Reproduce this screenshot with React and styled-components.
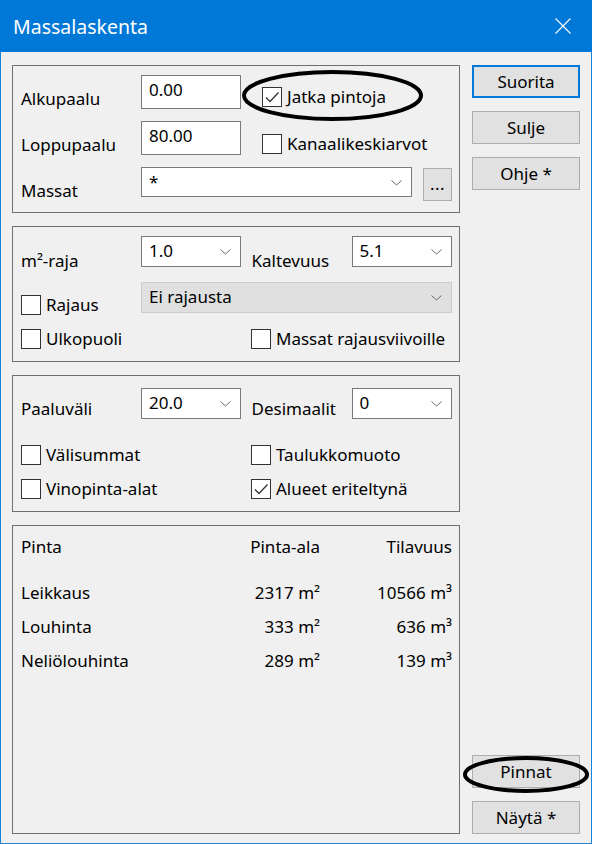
import React from "react";
import styled, { createGlobalStyle } from "styled-components";

const GlobalStyle = createGlobalStyle`
  html, body {
    margin: 0;
    padding: 0;
    background: #f0f0f0;
  }
  body {
    font-family: "Noto Sans", "Open Sans", sans-serif;
    font-size: 17px;
    color: #000;
  }
`;

const Window = styled.div`
  width: 592px;
  height: 844px;
  display: flex;
  flex-direction: column;
  background: #f0f0f0;
`;

const TitleBar = styled.div`
  height: 52px;
  flex: none;
  background: #0078d7;
  color: #fff;
  display: flex;
  align-items: center;
  justify-content: space-between;
  padding: 0 21px 0 13px;
  box-sizing: border-box;

  h1 {
    margin: 0;
    font-size: 19.5px;
    font-weight: 400;
    line-height: 26px;
    padding-top: 2px;
  }
`;

const Body = styled.div`
  flex: 1;
  display: flex;
  border: 1px solid #1883d7;
  border-top: none;
  padding: 13px 11px 9px 11px;
`;

const LeftCol = styled.div`
  width: 448px;
  display: flex;
  flex-direction: column;
  gap: 13px;
`;

const RightCol = styled.div`
  width: 108px;
  margin-left: 12px;
  display: flex;
  flex-direction: column;
  gap: 13px;
`;

const Spacer = styled.div`
  flex: 1;
`;

const Group = styled.div`
  box-sizing: border-box;
  border: 1px solid #6f6f6f;
  height: ${(p) => (p.h ? `${p.h}px` : "auto")};
  flex: ${(p) => (p.grow ? 1 : "none")};
  padding: ${(p) => p.pt || 9}px 7px 0 8px;
  display: flex;
  flex-direction: column;
`;

const Row = styled.div`
  display: flex;
  align-items: flex-end;
  height: ${(p) => p.h}px;
  margin-top: ${(p) => p.mt || 0}px;
`;

const Label = styled.div`
  width: ${(p) => p.w}px;
  flex: none;
  line-height: 20px;
  white-space: nowrap;
`;

const TextBox = styled.div`
  align-self: flex-start;
  box-sizing: border-box;
  width: 100px;
  height: 34px;
  border: 1px solid #7a7a7a;
  background: #fff;
  padding: 4px 7px;
  line-height: 20px;
`;

const SelectBox = styled.div`
  align-self: flex-start;
  box-sizing: border-box;
  width: ${(p) => p.w}px;
  height: ${(p) => p.h || 31}px;
  border: 1px solid ${(p) => (p.disabled ? "#cccccc" : "#7a7a7a")};
  background: ${(p) => (p.disabled ? "#e0e0e0" : "#fff")};
  padding: 4px 9px 0 7px;
  line-height: 20px;
  display: flex;
  justify-content: space-between;

  svg {
    margin-top: 8px;
    flex: none;
  }
`;

const Gap = styled.div`
  width: ${(p) => p.w}px;
  flex: none;
`;

const DotsButton = styled.div`
  align-self: flex-start;
  margin-top: 1px;
  box-sizing: border-box;
  width: 29px;
  height: 33px;
  background: #e1e1e1;
  border: 1px solid #adadad;
  text-align: center;
  line-height: 30px;
  letter-spacing: 0.5px;
`;

const Check = styled.label`
  position: relative;
  display: flex;
  align-items: center;
  gap: 5px;
  width: ${(p) => (p.w ? `${p.w}px` : "auto")};
  flex: none;
  height: 20px;
  line-height: 20px;
  margin-bottom: ${(p) => p.mb || 0}px;
  white-space: nowrap;
`;

const Box = styled.span`
  box-sizing: border-box;
  width: 20px;
  height: 20px;
  border: 1px solid #333;
  background: #fff;
  flex: none;
  display: flex;
  align-items: center;
  justify-content: center;
`;

const Ring = styled.svg`
  position: absolute;
  left: ${(p) => p.x}px;
  top: ${(p) => p.y}px;
  pointer-events: none;
  overflow: visible;
`;

const Button = styled.div`
  position: relative;
  box-sizing: border-box;
  height: 33px;
  background: #e1e1e1;
  border: ${(p) => (p.primary ? "2px solid #0078d7" : "1px solid #adadad")};
  display: flex;
  align-items: center;
  justify-content: center;
  line-height: 20px;
`;

const Table = styled.div`
  display: flex;
  flex-direction: column;
`;

const TableRow = styled.div`
  display: grid;
  grid-template-columns: 199px 100px 132px;
  line-height: 34px;
  margin-bottom: ${(p) => p.mb || 0}px;

  span:nth-child(n + 2) {
    text-align: right;
  }
`;

const Chevron = () => (
  <svg width="11" height="6" viewBox="0 0 11 6">
    <path d="M0.5 0.5 L5.5 5 L10.5 0.5" fill="none" stroke="#6a6a6a" strokeWidth="1" />
  </svg>
);

const Tick = () => (
  <svg width="16" height="16" viewBox="0 0 16 16">
    <path d="M2 8.5 L6 12.5 L14.5 3.5" fill="none" stroke="#333" strokeWidth="1.3" />
  </svg>
);

function Checkbox({ checked, children, w, mb, ring }) {
  return (
    <Check w={w} mb={mb}>
      <Box>{checked && <Tick />}</Box>
      {children}
      {ring}
    </Check>
  );
}

function Select({ value, w, h, disabled }) {
  return (
    <SelectBox w={w} h={h} disabled={disabled}>
      <span>{value}</span>
      <Chevron />
    </SelectBox>
  );
}

const Ellipse = ({ x, y, w, h }) => (
  <Ring x={x} y={y} width={w} height={h}>
    <ellipse cx={w / 2} cy={h / 2} rx={w / 2 - 2} ry={h / 2 - 2} fill="none" stroke="#000" strokeWidth="4" />
  </Ring>
);

const results = [
  { name: "Leikkaus", area: "2317 m²", vol: "10566 m³" },
  { name: "Louhinta", area: "333 m²", vol: "636 m³" },
  { name: "Neliölouhinta", area: "289 m²", vol: "139 m³" },
];

export default function App() {
  return (
    <>
      <GlobalStyle />
      <Window>
        <TitleBar>
          <h1>Massalaskenta</h1>
          <svg width="16" height="16" viewBox="0 0 16 16">
            <path d="M0.5 0.5 L15.5 15.5 M15.5 0.5 L0.5 15.5" stroke="#fff" strokeWidth="1.1" />
          </svg>
        </TitleBar>
        <Body>
          <LeftCol>
            <Group h={148}>
              <Row h={34}>
                <Label w={120}>Alkupaalu</Label>
                <TextBox>0.00</TextBox>
                <Gap w={21} />
                <Checkbox checked mb={2} ring={<Ellipse x={-20} y={-17} w={181} h={51} />}>
                  Jatka pintoja
                </Checkbox>
              </Row>
              <Row h={34} mt={12}>
                <Label w={120}>Loppupaalu</Label>
                <TextBox>80.00</TextBox>
                <Gap w={21} />
                <Checkbox mb={1}>Kanaalikeskiarvot</Checkbox>
              </Row>
              <Row h={34} mt={12}>
                <Label w={120}>Massat</Label>
                <Select value="*" w={271} h={30} />
                <Gap w={11} />
                <DotsButton>...</DotsButton>
              </Row>
            </Group>

            <Group h={136}>
              <Row h={35}>
                <Label w={120}>m²-raja</Label>
                <Select value="1.0" w={100} />
                <Gap w={11} />
                <Label w={100}>Kaltevuus</Label>
                <Select value="5.1" w={101} />
              </Row>
              <Row h={34} mt={11}>
                <Checkbox w={120} mb={1}>Rajaus</Checkbox>
                <Select value="Ei rajausta" w={311} disabled />
              </Row>
              <Row h={20} mt={13}>
                <Checkbox w={230}>Ulkopuoli</Checkbox>
                <Checkbox>Massat rajausviivoille</Checkbox>
              </Row>
            </Group>

            <Group h={137} pt={12}>
              <Row h={31}>
                <Label w={120}>Paaluväli</Label>
                <Select value="20.0" w={100} />
                <Gap w={11} />
                <Label w={100}>Desimaalit</Label>
                <Select value="0" w={101} />
              </Row>
              <Row h={20} mt={26}>
                <Checkbox w={230}>Välisummat</Checkbox>
                <Checkbox>Taulukkomuoto</Checkbox>
              </Row>
              <Row h={20} mt={14}>
                <Checkbox w={230}>Vinopinta-alat</Checkbox>
                <Checkbox checked>Alueet eriteltynä</Checkbox>
              </Row>
            </Group>

            <Group grow pt={4}>
              <Table>
                <TableRow mb={12}>
                  <span>Pinta</span>
                  <span>Pinta-ala</span>
                  <span>Tilavuus</span>
                </TableRow>
                {results.map((r) => (
                  <TableRow key={r.name}>
                    <span>{r.name}</span>
                    <span>{r.area}</span>
                    <span>{r.vol}</span>
                  </TableRow>
                ))}
              </Table>
            </Group>
          </LeftCol>

          <RightCol>
            <Button primary>Suorita</Button>
            <Button>Sulje</Button>
            <Button>Ohje *</Button>
            <Spacer />
            <Button>
              Pinnat
              <Ellipse x={-10} y={0} w={126} h={37} />
            </Button>
            <Button>Näytä *</Button>
          </RightCol>
        </Body>
      </Window>
    </>
  );
}
